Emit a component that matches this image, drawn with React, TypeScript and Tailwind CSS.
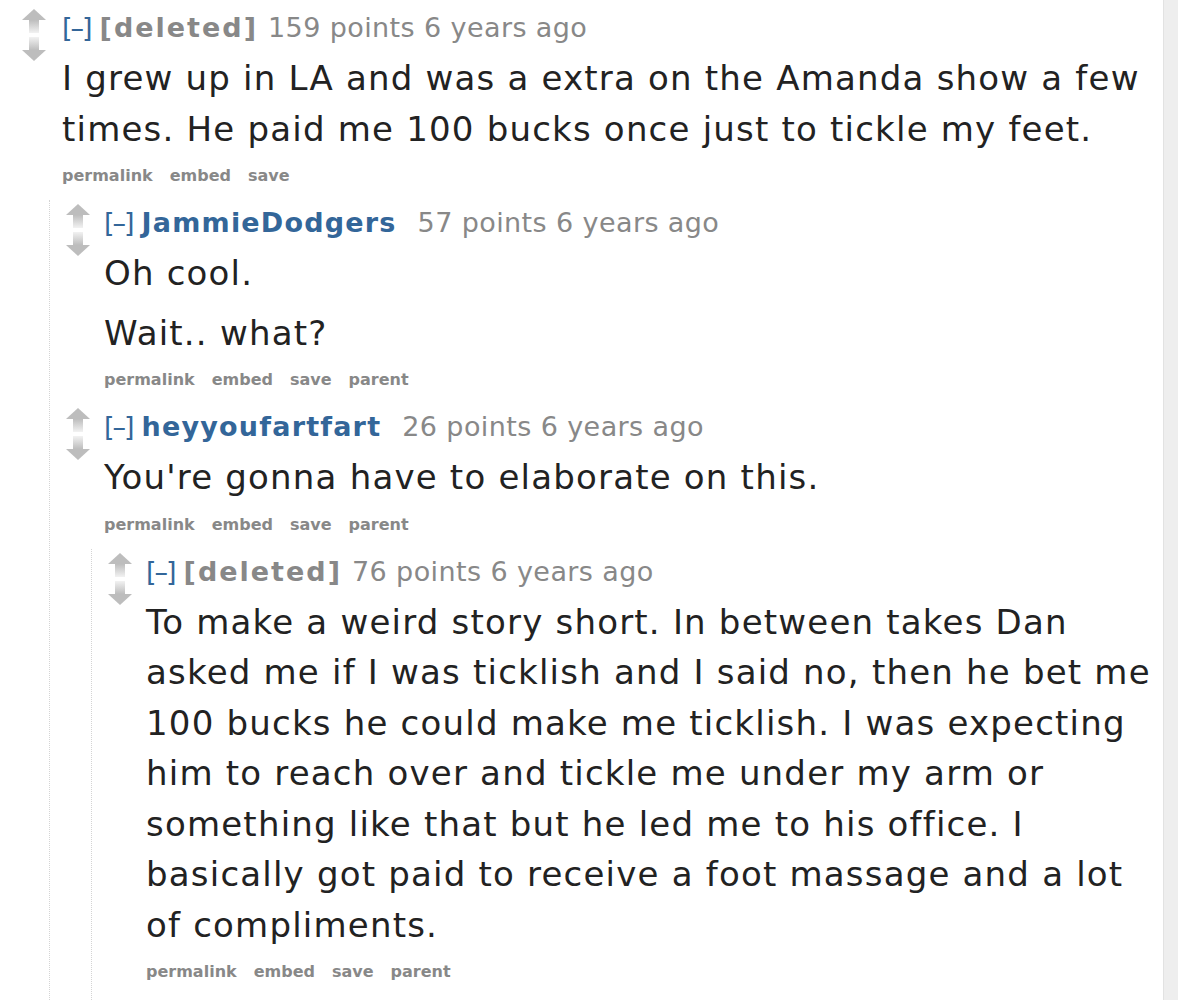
import { Fragment, ReactNode } from 'react';

type Comment = {
  id: string;
  author: string;
  deleted?: boolean;
  points: string;
  body: string[];
  parent?: boolean;
  replies?: Comment[];
};

const thread: Comment = {
  id: 'c1',
  author: '[deleted]',
  deleted: true,
  points: '159 points',
  body: [
    'I grew up in LA and was a extra on the Amanda show a few times. He paid me 100 bucks once just to tickle my feet.',
  ],
  replies: [
    {
      id: 'c2',
      author: 'JammieDodgers',
      points: '57 points',
      body: ['Oh cool.', 'Wait.. what?'],
      parent: true,
    },
    {
      id: 'c3',
      author: 'heyyoufartfart',
      points: '26 points',
      body: ["You're gonna have to elaborate on this."],
      parent: true,
      replies: [
        {
          id: 'c4',
          author: '[deleted]',
          deleted: true,
          points: '76 points',
          body: [
            'To make a weird story short. In between takes Dan asked me if I was ticklish and I said no, then he bet me 100 bucks he could make me ticklish. I was expecting him to reach over and tickle me under my arm or something like that but he led me to his office. I basically got paid to receive a foot massage and a lot of compliments.',
          ],
          parent: true,
        },
      ],
    },
  ],
};

const Arrows = () => (
  <svg width="24" height="52" viewBox="0 0 24 52">
    <defs>
      <linearGradient id="stemUp" x1="0" y1="0" x2="0" y2="1">
        <stop offset="0" stopColor="#bdbdbd" />
        <stop offset="1" stopColor="#f2f2f2" />
      </linearGradient>
      <linearGradient id="stemDown" x1="0" y1="0" x2="0" y2="1">
        <stop offset="0" stopColor="#f2f2f2" />
        <stop offset="1" stopColor="#bdbdbd" />
      </linearGradient>
    </defs>
    {/* up */}
    <polygon points="12,0 24,11 0,11" fill="#bdbdbd" />
    <rect x="7" y="11" width="10" height="13" fill="url(#stemUp)" />
    {/* down */}
    <rect x="7" y="28" width="10" height="13" fill="url(#stemDown)" />
    <polygon points="0,41 24,41 12,52" fill="#bdbdbd" />
  </svg>
);

const Buttons = ({ parent }: { parent?: boolean }) => (
  <div className="mt-[12px] flex gap-[17px] text-[16px] leading-[20px] font-bold text-[#888]">
    <span>permalink</span>
    <span>embed</span>
    <span>save</span>
    {parent && <span>parent</span>}
  </div>
);

const Children = ({ children }: { children: ReactNode }) => (
  <div className="-ml-[13px] mt-[14px] border-l border-dotted border-[#d4d4d4] pl-[16px] pb-[40px]">{children}</div>
);

const CommentView = ({ c, top }: { c: Comment; top?: boolean }) => (
  <div className={top ? 'pt-[6px]' : 'pt-[6px] mb-[14px]'}>
    <div className="flex">
      <div className={top ? 'w-[40px] shrink-0 -mt-[2px]' : 'w-[38px] shrink-0 -mt-[2px]'}>
        <Arrows />
      </div>
      <div className="flex-1 min-w-0">
        <div className="text-[27px] leading-[34px] whitespace-nowrap tracking-[0.4px]">
          <span className="text-[#369] tracking-[-2px]">[–]</span>{' '}
          <span
            className={
              c.deleted
                ? 'font-bold text-[#888] mr-[1px] tracking-[2px]'
                : 'font-bold text-[#369] mr-[12px] tracking-[1.2px]'
            }
          >
            {c.author}
          </span>{' '}
          <span className="text-[#888]">{c.points} 6 years ago</span>
        </div>
        <div className="mt-[8px] text-[34px] leading-[50.5px] tracking-[1.2px] text-[#222]">
          {c.body.map((p, i) => (
            <p key={i} className={i > 0 ? 'mt-[9px]' : ''}>
              {p}
            </p>
          ))}
        </div>
        <Buttons parent={c.parent} />
        {c.replies && (
          <Children>
            {c.replies.map((r) => (
              <Fragment key={r.id}>
                <CommentView c={r} />
              </Fragment>
            ))}
          </Children>
        )}
      </div>
    </div>
  </div>
);

export default function App() {
  return (
    <div className="flex h-[1000px] overflow-hidden bg-white" style={{ fontFamily: '"DejaVu Sans", Verdana, sans-serif' }}>
      <div className="flex-1 min-w-0 pl-[22px] pr-[3px] pt-[5px]">
        <CommentView c={thread} top />
      </div>
      <div className="w-[15px] shrink-0 border-l border-[#e2e2e2] bg-[#eeeeee]" />
    </div>
  );
}
